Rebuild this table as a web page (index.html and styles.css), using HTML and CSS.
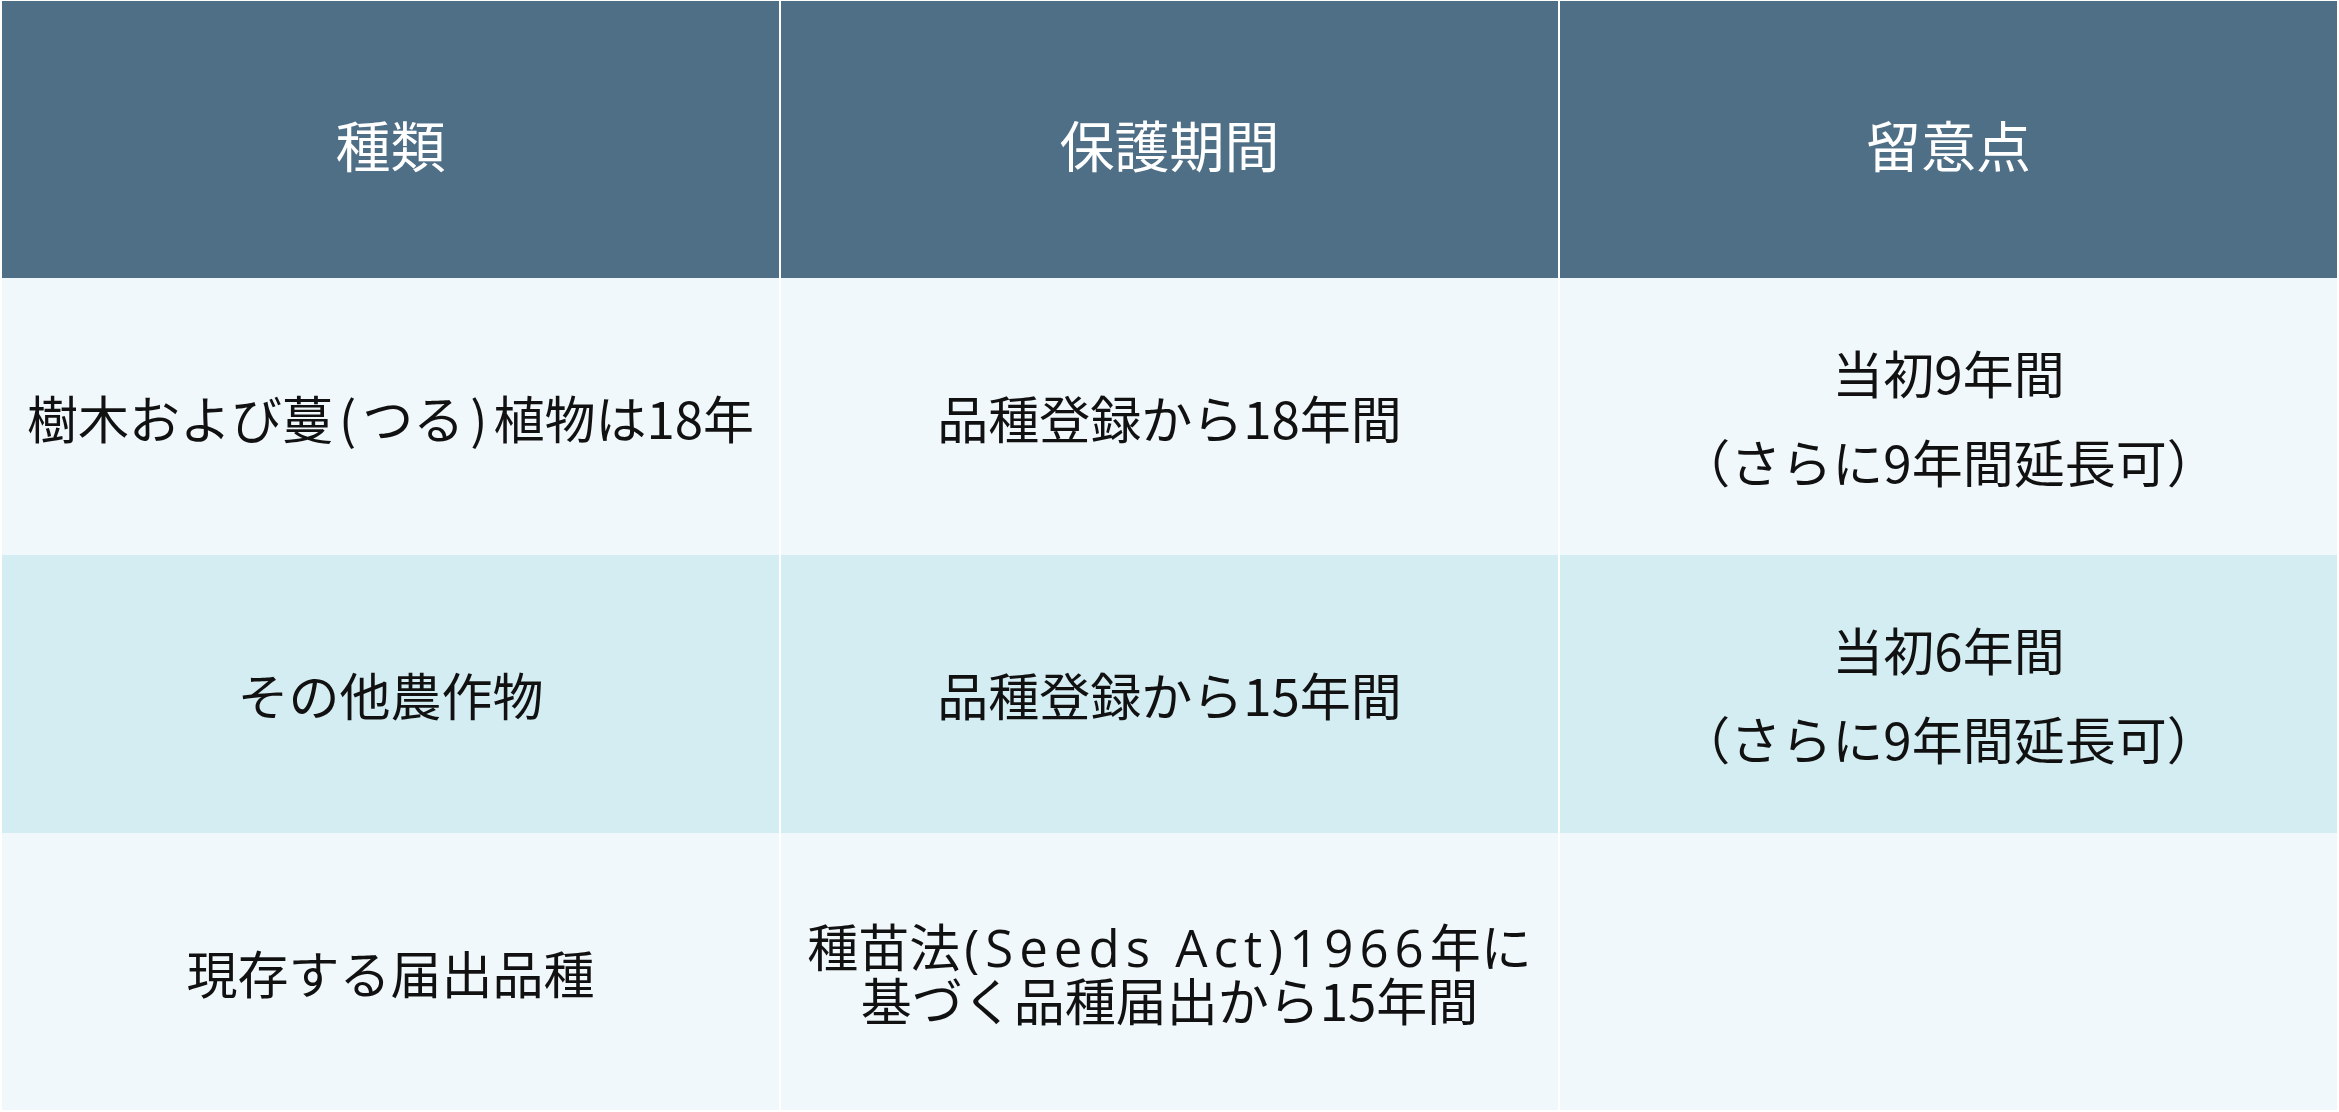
FILE: index.html
```html
<!DOCTYPE html>
<html lang="ja">
<head>
<meta charset="utf-8">
<title>品種保護期間</title>
<link rel="stylesheet" href="styles.css">
</head>
<body>
<div class="table">
  <div class="cell head">種類</div>
  <div class="cell head">保護期間</div>
  <div class="cell head">留意点</div>

  <div class="cell light">樹木および蔓<span class="paren">(</span>つる<span class="paren">)</span>植物は18年</div>
  <div class="cell light">品種登録から18年間</div>
  <div class="cell light two"><span>当初9年間</span><span>（さらに9年間延長可）</span></div>

  <div class="cell dark">その他農作物</div>
  <div class="cell dark">品種登録から15年間</div>
  <div class="cell dark two"><span>当初6年間</span><span>（さらに9年間延長可）</span></div>

  <div class="cell light">現存する届出品種</div>
  <div class="cell light">種苗法<span class="latin">(Seeds Act)1966</span>年に<br>基づく品種届出から15年間</div>
  <div class="cell light"></div>
</div>
</body>
</html>
```
FILE: styles.css
```css
html, body {
  margin: 0;
  padding: 0;
  background: #ffffff;
}
body {
  width: 2339px;
  height: 1112px;
  overflow: hidden;
  font-family: "Noto Sans CJK JP", "Noto Sans", sans-serif;
}
.table {
  box-sizing: border-box;
  width: 2339px;
  height: 1112px;
  padding: 1px 2px 2px 2px;
  display: grid;
  grid-template-columns: 1fr 1fr 1fr;
  grid-template-rows: 277px 277px 278px 277px;
  column-gap: 2px;
  row-gap: 0;
  background: #ffffff;
}
.cell {
  display: flex;
  flex-direction: column;
  align-items: center;
  justify-content: center;
  text-align: center;
  font-size: 51px;
  line-height: 52px;
  color: #111111;
}
.cell:not(.two) {
  display: block;
  align-content: center;
}
.head {
  background: #4f6f87;
  color: #ffffff;
  font-size: 55px;
  padding-top: 6px;
  box-sizing: border-box;
}
.light {
  background: #f0f8fb;
}
.dark {
  background: #d4edf2;
}
.two span {
  display: block;
  line-height: 89px;
}
.paren {
  margin: 0 6px;
}
.latin {
  font-family: "Open Sans", "Noto Sans", sans-serif;
  letter-spacing: 6px;
  margin-left: 4px;
}
```
